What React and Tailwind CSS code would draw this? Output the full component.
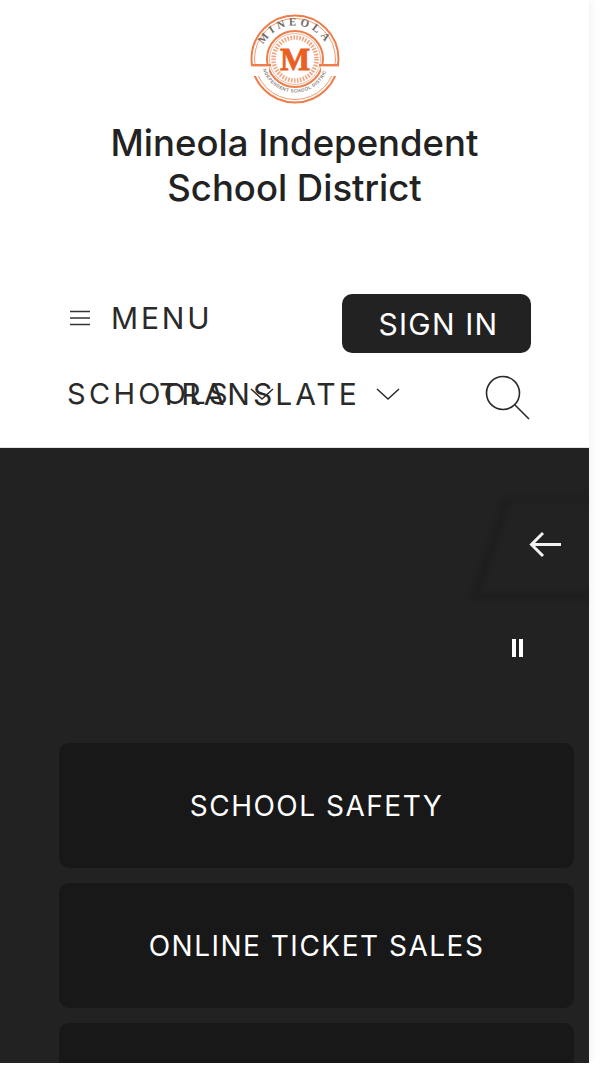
import React from 'react';

const font = { fontFamily: 'Inter, "Liberation Sans", sans-serif' };

function Logo() {
  return (
    <svg width="90" height="90" viewBox="0 0 90 90" className="block">
      <defs>
        <path id="logo-top" d="M 9.5 47 A 35.5 35.5 0 0 1 80.5 47" />
        <path id="logo-bottom" d="M 13 56 A 34 34 0 0 0 77 56" />
      </defs>
      <circle cx="45" cy="45" r="43.5" fill="none" stroke="#ee7d4b" strokeWidth="2" />
      <circle cx="45" cy="45" r="40.5" fill="none" stroke="#f19a72" strokeWidth="1" />
      <circle cx="45" cy="45" r="28" fill="none" stroke="#ee7d4b" strokeWidth="2" />
      <circle cx="45" cy="45" r="25.5" fill="none" stroke="#f3a684" strokeWidth="0.8" />
      <circle cx="45" cy="45" r="21.5" fill="none" stroke="#f3a684" strokeWidth="4.5" strokeDasharray="1.6 1.4" />
      <rect x="1" y="52" width="18" height="10" fill="#fff" />
      <rect x="71" y="52" width="18" height="10" fill="#fff" />
      <rect x="1" y="50" width="20" height="2.4" fill="#ee7d4b" />
      <rect x="69" y="50" width="20" height="2.4" fill="#ee7d4b" />
      <text fontSize="11" fontWeight="700" fill="#6f6a66" letterSpacing="3.4" style={{ fontFamily: '"Liberation Serif", serif' }}>
        <textPath href="#logo-top" startOffset="50%" textAnchor="middle">MINEOLA</textPath>
      </text>
      <text fontSize="4.6" fontWeight="700" fill="#8a837c" letterSpacing="0.4" style={{ fontFamily: '"Liberation Sans", sans-serif' }}>
        <textPath href="#logo-bottom" startOffset="50%" textAnchor="middle">INDEPENDENT SCHOOL DISTRICT</textPath>
      </text>
      <circle cx="45" cy="45" r="15" fill="#fff" />
      <text x="45" y="56" textAnchor="middle" fontSize="32" fontWeight="700" fill="#ea5f22" stroke="#ea5f22" strokeWidth="0.8" style={{ fontFamily: '"Liberation Serif", serif' }}>M</text>
    </svg>
  );
}

function Chevron() {
  return (
    <svg width="26" height="14" viewBox="0 0 26 14" fill="none" stroke="#2a2a2a" strokeWidth="1.5">
      <path d="M2 2 L13 12 L24 2" />
    </svg>
  );
}

function LinkCard({ label }) {
  return (
    <a className="flex h-[125px] shrink-0 items-center justify-center rounded-[10px] bg-[#181818] text-[28px] tracking-[1.5px] text-white">
      {label}
    </a>
  );
}

export default function App() {
  return (
    <div className="h-[1063px] w-[589px] overflow-hidden bg-white shadow-[2px_0_8px_rgba(0,0,0,0.06)]" style={font}>
      {/* Header */}
      <header className="relative flex h-[448px] flex-col items-center border-b border-[#e6e6e6] bg-white">
        <div className="mt-[14px]">
          <Logo />
        </div>
        <h1 className="mt-[17px] w-[420px] text-center text-[36.5px] font-[450] leading-[45px] text-[#222222]">
          Mineola Independent School District
        </h1>

        <div className="mt-[82px] flex w-full items-start justify-between pl-[69px] pr-[58px]">
          <div className="flex items-center gap-[20px] pt-[7px]">
            <svg width="22" height="18" viewBox="0 0 22 18" stroke="#333" strokeWidth="1.6">
              <path d="M1 2.5H21M1 9H21M1 15.5H21" />
            </svg>
            <span className="text-[30px] leading-[36px] tracking-[2.8px] text-[#2a2a2a]">MENU</span>
          </div>
          <button className="mt-[1px] flex h-[59px] w-[189px] items-center justify-center rounded-[10px] bg-[#222222] pl-[4px] pt-[2px] text-[30px] tracking-[1.2px] text-white">
            SIGN IN
          </button>
        </div>

        <div className="relative h-[94px] w-full">
          {/* these two overlap in the source page */}
          <div className="absolute left-[67px] top-[23px] flex items-center gap-[18px] text-[29px] leading-[36px] tracking-[3.3px] text-[#2a2a2a]">
            SCHOOLS
            <Chevron />
          </div>
          <div className="absolute left-[159px] top-[23px] flex items-center gap-[15px] text-[30px] leading-[36px] tracking-[3px] text-[#2a2a2a]">
            TRANSLATE
            <Chevron />
          </div>
          <svg className="absolute left-[484px] top-[21px]" width="48" height="48" viewBox="0 0 48 48" fill="none" stroke="#2a2a2a" strokeWidth="1.6">
            <circle cx="19" cy="19" r="16.5" />
            <path d="M31 31 L45 45" />
          </svg>
        </div>
      </header>

      {/* Dark section */}
      <section className="relative h-[615px] bg-[#222222]">
        {/* slide arrow tab, runs past the page edge so the blur doesn't fade out */}
        <svg className="absolute left-[468px] top-[46px] blur-[2px]" width="150" height="110" viewBox="0 0 150 110" fill="none">
          <path d="M40 5 H150" stroke="#1f1f1f" strokeWidth="5" />
          <path d="M40 5 L7 102 H150" stroke="#1e1e1e" strokeWidth="8" />
        </svg>
        <svg className="absolute left-[529px] top-[83px]" width="33" height="27" viewBox="0 0 33 27" fill="none" stroke="#f2f2f2" strokeWidth="3">
          <path d="M32 13.5 H3 M14 2 L2.5 13.5 L14 25" />
        </svg>
        {/* pause */}
        <div className="absolute left-[512px] top-[191px] flex gap-[3px]">
          <div className="h-[18px] w-[4px] bg-white" />
          <div className="h-[18px] w-[4px] bg-white" />
        </div>

        <div className="flex flex-col gap-[15px] pl-[59px] pr-[15px] pt-[295px]">
          <LinkCard label="SCHOOL SAFETY" />
          <LinkCard label="ONLINE TICKET SALES" />
          <LinkCard label="" />
        </div>
      </section>
    </div>
  );
}
